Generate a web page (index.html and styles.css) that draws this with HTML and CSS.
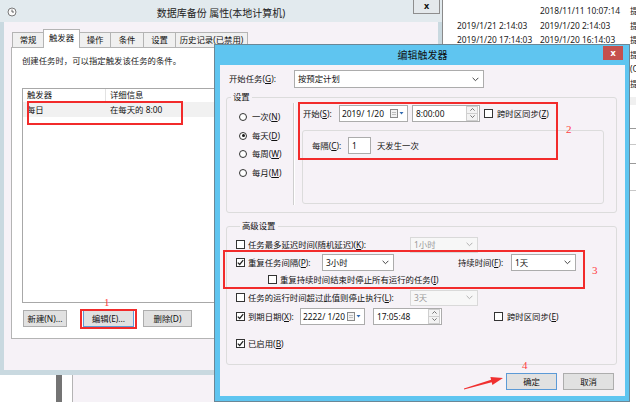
FILE: index.html
```html
<!DOCTYPE html>
<html lang="zh-CN">
<head>
  <meta charset="UTF-8" />
  <title>编辑触发器</title>
  <link rel="stylesheet" href="styles.css">
</head>
<body>
<div class="desk">

  <!-- window behind, on the right -->
  <div class="win-right">
    <div class="log">
      <div class="log-row"><span></span><span>2018/11/11 10:07:14</span><span>提</span></div>
      <div class="log-row"><span>2019/1/21 2:14:03</span><span>2019/1/20 2:14:03</span><span>提</span></div>
      <div class="log-row"><span>2019/1/20 17:14:03</span><span>2019/1/20 16:14:03</span><span>提</span></div>
      <div class="log-row"><span></span><span></span><span>提</span></div>
      <div class="log-row"><span></span><span></span><span>(C</span></div>
      <div class="log-row"><span></span><span></span><span>提</span></div>
    </div>
    <div class="log-band"></div>
    <div class="log-line l1"></div>
    <div class="log-line l2"></div>
    <div class="log-line l3"></div>
    <div class="log-line l4"></div>
  </div>

  <!-- properties window -->
  <div class="win-back">
    <div class="back-title">
      <svg class="clock" width="10" height="10" viewBox="0 0 10 10">
        <circle cx="5" cy="5" r="4" fill="#fafafa" stroke="#7a7a7a" stroke-width="1"/>
        <path d="M5 2.6 V5 H7" fill="none" stroke="#555" stroke-width="0.9"/>
      </svg>
      <span class="back-caption">数据库备份 属性(本地计算机)</span>
      <span class="back-close">x</span>
    </div>
    <div class="back-client">
      <div class="tabs">
        <span class="tab t1">常规</span>
        <span class="tab t2 active">触发器</span>
        <span class="tab t3">操作</span>
        <span class="tab t4">条件</span>
        <span class="tab t5">设置</span>
        <span class="tab t6">历史记录(已禁用)</span>
      </div>
      <div class="tab-panel">
        <p class="desc">创建任务时，可以指定触发该任务的条件。</p>
        <div class="listview">
          <div class="lv-head"><span class="lv-c1">触发器</span><span class="lv-c2">详细信息</span></div>
          <div class="lv-row"><span class="lv-c1">每日</span><span class="lv-c2">在每天的 8:00</span></div>
        </div>
        <div class="back-buttons">
          <span class="btn b-new">新建(N)...</span>
          <span class="btn b-edit">编辑(E)...</span>
          <span class="btn b-del">删除(D)</span>
        </div>
      </div>
    </div>
  </div>

  <div class="win-bottom"></div>

  <!-- edit trigger dialog -->
  <div class="dialog">
    <div class="dlg-title">编辑触发器<span class="dlg-close">x</span></div>
    <div class="dlg-client">

      <div class="row-start">
        <span class="lbl-start">开始任务(<u>G</u>):</span>
        <span class="field combo w-start"><span class="val">按预定计划</span>
          <svg class="chev" width="7" height="5" viewBox="0 0 7 5"><path d="M0.6 0.8 L3.5 3.7 L6.4 0.8" fill="none" stroke="#444" stroke-width="1"/></svg>
        </span>
      </div>

      <fieldset class="group">
        <legend>设置</legend>
        <div class="settings">
          <div class="radios">
            <div class="radio-row"><span class="radio"></span>一次(<u>N</u>)</div>
            <div class="radio-row"><span class="radio on"></span>每天(<u>D</u>)</div>
            <div class="radio-row"><span class="radio"></span>每周(<u>W</u>)</div>
            <div class="radio-row"><span class="radio"></span>每月(<u>M</u>)</div>
          </div>
          <div class="divider"></div>
          <div class="sched">
            <div class="sched-top">
              <span class="lbl-begin">开始(<u>S</u>):</span>
              <span class="field w-date"><span class="val">2019/&nbsp;1/20</span>
                <svg class="cal" width="15" height="9" viewBox="0 0 15 9"><rect x="0.5" y="0.5" width="7" height="8" fill="#f2f2f2" stroke="#8a8a8a"/><path d="M2 3.5 H6 M2 5.5 H6" stroke="#b0b0b0" stroke-width="0.8"/><path d="M9.5 3 H13.5 L11.5 5.5 Z" fill="#2f68b0"/></svg>
              </span>
              <span class="field w-time"><span class="val">8:00:00</span>
                <span class="spin"><span class="spin-up"><svg width="5" height="3" viewBox="0 0 5 3"><path d="M0.4 2.6 L2.5 0.5 L4.6 2.6" fill="none" stroke="#555" stroke-width="0.8"/></svg></span><span class="spin-dn"><svg width="5" height="3" viewBox="0 0 5 3"><path d="M0.4 0.4 L2.5 2.5 L4.6 0.4" fill="none" stroke="#555" stroke-width="0.8"/></svg></span></span>
              </span>
              <span class="cb cb-tz"></span><span>跨时区同步(<u>Z</u>)</span>
            </div>
            <div class="recur">
              <div class="recur-row">
                <span class="lbl-every">每隔(<u>C</u>):</span>
                <span class="field w-num"><span class="val">1</span></span>
                <span class="every-txt">天发生一次</span>
              </div>
            </div>
          </div>
        </div>
      </fieldset>

      <fieldset class="group adv">
        <legend>高级设置</legend>
        <div class="adv-row r1">
          <span class="cb"></span><span class="lbl w162">任务最多延迟时间(随机延迟)(<u>K</u>):</span>
          <span class="field combo disabled w68"><span class="val">1小时</span>
            <svg class="chev" width="7" height="5" viewBox="0 0 7 5"><path d="M0.6 0.8 L3.5 3.7 L6.4 0.8" fill="none" stroke="#b0b0b0" stroke-width="1"/></svg>
          </span>
        </div>
        <div class="adv-row r2">
          <span class="cb on"><svg width="7" height="7" viewBox="0 0 7 7"><path d="M0.8 3.6 L2.7 5.5 L6.2 1.2" fill="none" stroke="#222" stroke-width="1.2"/></svg></span><span class="lbl w74">重复任务间隔(<u>P</u>):</span>
          <span class="field combo w72"><span class="val">3小时</span>
            <svg class="chev" width="7" height="5" viewBox="0 0 7 5"><path d="M0.6 0.8 L3.5 3.7 L6.4 0.8" fill="none" stroke="#444" stroke-width="1"/></svg>
          </span>
          <span class="lbl lbl-dur">持续时间(<u>F</u>):</span>
          <span class="field combo w65"><span class="val">1天</span>
            <svg class="chev" width="7" height="5" viewBox="0 0 7 5"><path d="M0.6 0.8 L3.5 3.7 L6.4 0.8" fill="none" stroke="#444" stroke-width="1"/></svg>
          </span>
        </div>
        <div class="adv-row r3">
          <span class="cb"></span><span>重复持续时间结束时停止所有运行的任务(<u>I</u>)</span>
        </div>
        <div class="adv-row r4">
          <span class="cb"></span><span class="lbl w162">任务的运行时间超过此值则停止执行(<u>L</u>):</span>
          <span class="field combo disabled w68"><span class="val">3天</span>
            <svg class="chev" width="7" height="5" viewBox="0 0 7 5"><path d="M0.6 0.8 L3.5 3.7 L6.4 0.8" fill="none" stroke="#b0b0b0" stroke-width="1"/></svg>
          </span>
        </div>
        <div class="adv-row r5">
          <span class="cb on"><svg width="7" height="7" viewBox="0 0 7 7"><path d="M0.8 3.6 L2.7 5.5 L6.2 1.2" fill="none" stroke="#222" stroke-width="1.2"/></svg></span><span class="lbl w52">到期日期(<u>X</u>):</span>
          <span class="field w-date2"><span class="val">2222/&nbsp;1/20</span>
            <svg class="cal" width="15" height="9" viewBox="0 0 15 9"><rect x="0.5" y="0.5" width="7" height="8" fill="#f2f2f2" stroke="#8a8a8a"/><path d="M2 3.5 H6 M2 5.5 H6" stroke="#b0b0b0" stroke-width="0.8"/><path d="M9.5 3 H13.5 L11.5 5.5 Z" fill="#2f68b0"/></svg>
          </span>
          <span class="field w-time2"><span class="val">17:05:48</span>
            <span class="spin"><span class="spin-up"><svg width="5" height="3" viewBox="0 0 5 3"><path d="M0.4 2.6 L2.5 0.5 L4.6 2.6" fill="none" stroke="#555" stroke-width="0.8"/></svg></span><span class="spin-dn"><svg width="5" height="3" viewBox="0 0 5 3"><path d="M0.4 0.4 L2.5 2.5 L4.6 0.4" fill="none" stroke="#555" stroke-width="0.8"/></svg></span></span>
          </span>
          <span class="cb cb-tz2"></span><span>跨时区同步(<u>E</u>)</span>
        </div>
        <div class="adv-row r6">
          <span class="cb on"><svg width="7" height="7" viewBox="0 0 7 7"><path d="M0.8 3.6 L2.7 5.5 L6.2 1.2" fill="none" stroke="#222" stroke-width="1.2"/></svg></span><span>已启用(<u>B</u>)</span>
        </div>
      </fieldset>

      <div class="dlg-buttons">
        <span class="btn default">确定</span>
        <span class="btn">取消</span>
      </div>
    </div>
  </div>

  <!-- red annotations -->
  <div class="mark box1"></div>
  <div class="mark box-edit"></div>
  <div class="mark box2"></div>
  <div class="mark box3"></div>
  <span class="num n1">1</span>
  <span class="num n2">2</span>
  <span class="num n3">3</span>
  <span class="num n4">4</span>
  <svg class="arrow" width="48" height="20" viewBox="0 0 48 20">
    <polygon points="4,16.6 31.1,7.8 30.4,5.1 43,6 32.4,12.9 31.7,10.2 4,17.4" fill="#f03030"/>
  </svg>
</div>
</body>
</html>
```

FILE: styles.css
```css
* {
  margin: 0;
  padding: 0;
  box-sizing: border-box;
}

body {
  font-family: "Noto Sans", "Noto Sans CJK SC", sans-serif;
  font-size: 8.4px;
  line-height: 12px;
  color: #111;
  background: #fff;
}

u {
  text-decoration: underline;
  text-underline-offset: 1px;
}

.desk {
  position: relative;
  width: 636px;
  height: 402px;
  overflow: hidden;
  background: #fff;
}

/* right window behind everything */
.win-right {
  position: absolute;
  left: 443px;
  top: 0;
  width: 193px;
  height: 402px;
  background: #fff;
  padding-top: 4px;
  overflow: hidden;
}

.log-row {
  display: grid;
  grid-template-columns: 83px 90px 20px;
  height: 14.6px;
  line-height: 14px;
  padding-left: 14px;
  color: #222;
  white-space: nowrap;
}

.log-band {
  margin-top: 5px;
  height: 8px;
  background: #f0f0f0;
}

.log-line {
  border-top: 1px solid #9a9a9a;
}
.log-line.l1 { margin-top: 23px; }
.log-line.l2 { margin-top: 15px; border-color: #c8c8c8; }
.log-line.l3 { margin-top: 18px; }
.log-line.l4 { margin-top: 26px; border-color: #c8c8c8; }

/* properties window */
.win-back {
  position: absolute;
  left: 0;
  top: 0;
  width: 443px;
  height: 375px;
  background: #c9d9e0;
  border-right: 1px solid #8a8a8a;
}

.back-title {
  position: relative;
  height: 22px;
  background: #e2eaee;
  text-align: center;
  font-size: 10px;
  line-height: 22px;
  padding-top: 2px;
  color: #222;
}

.clock {
  position: absolute;
  left: 7px;
  top: 7px;
}

.back-close {
  position: absolute;
  left: 413px;
  top: 0;
  width: 27px;
  height: 14px;
  border: 1px solid #8e8e8e;
  border-top: none;
  background: #e4e9ec;
  font-size: 9px;
  font-weight: bold;
  line-height: 12px;
  color: #111;
}

.back-client {
  margin: 0 4px;
  height: 348px;
  background: #f6f2f7;
  padding: 7px 0 0 7px;
}

.tabs {
  display: flex;
  align-items: flex-end;
  height: 18px;
  padding-left: 1px;
}

.tab {
  height: 15px;
  border: 1px solid #b4b4b4;
  border-bottom: none;
  margin-right: -1px;
  background: #f0f0f0;
  line-height: 13px;
  text-align: center;
  white-space: nowrap;
}

.tab.active {
  position: relative;
  height: 19px;
  margin-bottom: -1px;
  background: #fff;
  line-height: 16px;
  z-index: 2;
}

.t1 { width: 32px; }
.t2 { width: 37px; }
.t3 { width: 32px; }
.t4 { width: 34px; }
.t5 { width: 33px; }
.t6 { width: 73px; }

.tab-panel {
  width: 430px;
  height: 292px;
  border: 1px solid #b4b4b4;
  background: #fff;
  padding-left: 10px;
}

.desc {
  padding-top: 7px;
  height: 40px;
  color: #222;
}

.listview {
  width: 410px;
  height: 215px;
  border: 1px solid #a8a8a8;
}

.lv-head {
  display: flex;
  height: 12px;
  line-height: 12px;
}

.lv-row {
  display: flex;
  height: 15px;
  margin-top: 1px;
  line-height: 15px;
  background: #f1f1f1;
}

.lv-c1 {
  width: 83px;
  padding-left: 4px;
}

.lv-head .lv-c1 {
  border-right: 1px solid #e2e2e2;
}

.lv-c2 {
  padding-left: 4px;
}

.back-buttons {
  display: flex;
  margin-top: 7px;
  padding-left: 1px;
}

.btn {
  display: inline-block;
  height: 17px;
  border: 1px solid #adadad;
  background: #e1e1e1;
  line-height: 15px;
  text-align: center;
  white-space: nowrap;
}

.b-new { width: 44px; }
.b-edit { width: 51px; margin-left: 16px; border-color: #5c9ad6; }
.b-del { width: 49px; margin-left: 9px; }

.win-bottom {
  position: absolute;
  left: 0;
  top: 375px;
  width: 214px;
  height: 27px;
  background: linear-gradient(to right, #fff 0 56px, #747474 56px 62px, #fff 62px 72px, #b4b4b4 72px 73px, #f6f2f7 73px);
}

/* dialog */
.dialog {
  position: absolute;
  left: 214px;
  top: 44px;
  width: 416px;
  height: 358px;
  border: 1px solid #6b8796;
  background: #5fc5f0;
  padding: 0 4px 5px 5px;
  display: flex;
  flex-direction: column;
}

.dlg-title {
  position: relative;
  height: 20px;
  line-height: 20px;
  font-size: 10px;
  text-align: center;
  color: #111;
}

.dlg-close {
  position: absolute;
  right: 2px;
  top: 1px;
  width: 20px;
  height: 14px;
  background: #c5504d;
  color: #fff;
  font-size: 9px;
  font-weight: bold;
  line-height: 13px;
}

.dlg-client {
  flex: 1;
  background: #f6f2f7;
  padding: 5px 8px 0 6px;
  overflow: hidden;
}

.row-start {
  display: flex;
  align-items: center;
  height: 18px;
}

.lbl-start {
  width: 68px;
  padding-left: 3px;
}

.field {
  display: inline-flex;
  align-items: center;
  height: 17px;
  border: 1px solid #acacac;
  background: #fff;
  padding-left: 2px;
  white-space: nowrap;
}

.field .val {
  flex: 1;
}

.chev {
  margin-right: 4px;
}

.field.disabled {
  border-color: #d9d9d9;
  background: #f7f7f7;
  color: #9a9a9a;
}

.w-start { width: 190px; height: 18px; padding-left: 3px; }

.group {
  border: 1px solid #dcdcdc;
  border-radius: 3px;
  margin-top: 3px;
}

.group legend {
  margin-left: 4px;
  padding: 0 2px;
  line-height: 12px;
}

.settings {
  display: flex;
  height: 109px;
}

.radios {
  width: 66px;
  padding: 5px 0 0 12px;
}

.radio-row {
  display: flex;
  align-items: center;
  height: 18.5px;
}

.radio {
  position: relative;
  width: 8px;
  height: 8px;
  margin-right: 5px;
  border: 1px solid #333;
  border-radius: 50%;
  background: #fff;
}

.radio.on::after {
  content: '';
  position: absolute;
  left: 1.5px;
  top: 1.5px;
  width: 3px;
  height: 3px;
  border-radius: 50%;
  background: #1a1a1a;
}

.divider {
  width: 2px;
  margin-bottom: 7px;
  border-left: 1px solid #cfcfcf;
  border-right: 1px solid #fff;
}

.sched {
  flex: 1;
  padding: 2px 12px 0 7px;
}

.sched-top {
  display: flex;
  align-items: center;
  height: 17px;
  padding-left: 1px;
}

.lbl-begin { width: 36px; }

.w-date { width: 69px; }
.w-time { width: 68px; margin-left: 4px; padding-left: 3px; }

.cal {
  margin-right: 2px;
}

.spin {
  display: flex;
  flex-direction: column;
  width: 12px;
  height: 15px;
  margin-right: 1px;
}

.spin-up,
.spin-dn {
  display: flex;
  align-items: center;
  justify-content: center;
  height: 7.5px;
  border: 1px solid #cfcfcf;
  background: #f3f3f3;
}

.spin-dn {
  border-top: none;
}

.cb {
  display: inline-flex;
  align-items: center;
  justify-content: center;
  width: 9px;
  height: 9px;
  margin-right: 3px;
  border: 1px solid #333;
  background: #fff;
  flex-shrink: 0;
}

.cb-tz { margin-left: 4px; margin-right: 4px; }

.recur {
  margin-top: 8px;
  height: 74px;
  border: 1px solid #dcdcdc;
  border-radius: 3px;
}

.recur-row {
  display: flex;
  align-items: center;
  height: 17px;
  margin-top: 6px;
  padding-left: 9px;
}

.lbl-every { width: 36px; }

.w-num { width: 23px; padding-left: 3px; }

.every-txt { margin-left: 6px; }

.group.adv {
  margin-top: 7px;
  padding: 4px 0 12px 9px;
}

.adv-row {
  display: flex;
  align-items: center;
  height: 17px;
  white-space: nowrap;
}

.adv-row.r2 { margin-top: 1px; }
.adv-row.r3 { padding-left: 32px; }
.adv-row.r4 { margin-top: 1px; }
.adv-row.r5 { margin-top: 2px; }
.adv-row.r6 { margin-top: 10px; }

.lbl { display: inline-block; }
.w162 { width: 162px; }
.w74 { width: 74px; }
.w52 { width: 52px; }
.lbl-dur { width: 53px; margin-left: 64px; }

.w68 { width: 68px; height: 16px; padding-left: 3px; }
.w72 { width: 72px; padding-left: 3px; }
.w65 { width: 65px; padding-left: 3px; }

.w-date2 { width: 65px; }
.w-time2 { width: 69px; margin-left: 8px; padding-left: 3px; }

.cb-tz2 { margin-left: 52px; margin-right: 4px; }

.dlg-buttons {
  display: flex;
  justify-content: flex-end;
  gap: 6px;
  margin-top: 8px;
  padding-right: 3px;
}

.dlg-buttons .btn {
  width: 51px;
}

.btn.default {
  border-color: #5c9ad6;
}

/* red annotation overlays */
.mark {
  position: absolute;
  border: 2px solid #f22b2b;
}

.box1 { left: 27px; top: 101px; width: 156px; height: 24px; }
.box-edit { left: 80px; top: 309px; width: 57px; height: 20px; }
.box2 { left: 298px; top: 102px; width: 260px; height: 58px; }
.box3 { left: 223px; top: 250px; width: 362px; height: 39px; }

.num {
  position: absolute;
  font-family: "Liberation Serif", serif;
  font-size: 11px;
  line-height: 11px;
  color: #ff4040;
}

.n1 { left: 104px; top: 297px; }
.n2 { left: 566px; top: 124px; }
.n3 { left: 592px; top: 265px; }
.n4 { left: 522px; top: 360px; }

.arrow {
  position: absolute;
  left: 460px;
  top: 372px;
}
```
